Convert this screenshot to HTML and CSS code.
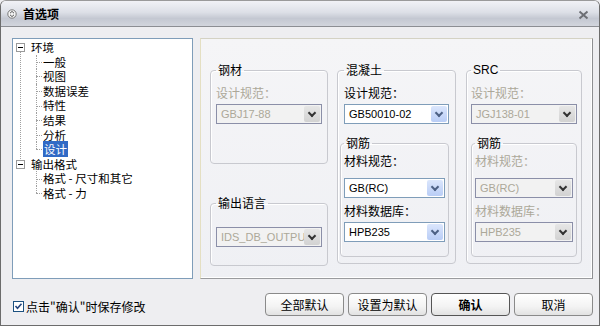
FILE: index.html
```html
<!DOCTYPE html>
<html lang="zh-CN">
  <head>
    <meta charset="UTF-8" />
    <title>首选项</title>
    <link rel="stylesheet" href="styles.css">
  </head>
  <body>
    <div class="window">
      <div class="titlebar">
        <svg class="app-icon" width="10" height="10" viewBox="0 0 10 10">
          <circle cx="5" cy="5" r="4.2" fill="#f4f4f4" stroke="#7a7a7a" stroke-width="1"/>
          <path d="M3 4.2 L5 2.4 L7 4.2 M3 5.8 L5 7.6 L7 5.8" fill="none" stroke="#555" stroke-width="1"/>
        </svg>
        <span class="title">首选项</span>
        <svg class="close" width="11" height="10" viewBox="0 0 11 10">
          <path d="M1.5 1.5 L9.5 8.5 M9.5 1.5 L1.5 8.5" stroke="#6d6f75" stroke-width="2"/>
        </svg>
      </div>

      <div class="content">
        <div class="main">
          <div class="tree">
            <div class="branch">
              <div class="node root"><span class="toggle"></span>环境</div>
              <div class="kids">
                <div class="node leaf">一般</div>
                <div class="node leaf">视图</div>
                <div class="node leaf">数据误差</div>
                <div class="node leaf">特性</div>
                <div class="node leaf">结果</div>
                <div class="node leaf">分析</div>
                <div class="node leaf"><span class="selected">设计</span></div>
              </div>
            </div>
            <div class="branch last">
              <div class="node root"><span class="toggle"></span>输出格式</div>
              <div class="kids">
                <div class="node leaf">格式 - 尺寸和其它</div>
                <div class="node leaf">格式 - 力</div>
              </div>
            </div>
          </div>

          <div class="panel">
            <div class="col col-steel">
              <fieldset class="group steel">
                <legend>钢材</legend>
                <div class="label disabled">设计规范：</div>
                <div class="combo disabled"><span class="value">GBJ17-88</span><span class="drop"></span></div>
              </fieldset>
              <fieldset class="group lang">
                <legend>输出语言</legend>
                <div class="combo disabled"><span class="value">IDS_DB_OUTPUT</span><span class="drop"></span></div>
              </fieldset>
            </div>

            <div class="col col-concrete">
              <fieldset class="group tall">
                <legend>混凝土</legend>
                <div class="label">设计规范：</div>
                <div class="combo"><span class="value">GB50010-02</span><span class="drop"></span></div>
                <fieldset class="group inner">
                  <legend>钢筋</legend>
                  <div class="label">材料规范：</div>
                  <div class="combo"><span class="value">GB(RC)</span><span class="drop"></span></div>
                  <div class="label second">材料数据库：</div>
                  <div class="combo"><span class="value">HPB235</span><span class="drop"></span></div>
                </fieldset>
              </fieldset>
            </div>

            <div class="col col-src">
              <fieldset class="group tall">
                <legend class="latin">SRC</legend>
                <div class="label disabled">设计规范：</div>
                <div class="combo disabled"><span class="value">JGJ138-01</span><span class="drop"></span></div>
                <fieldset class="group inner">
                  <legend>钢筋</legend>
                  <div class="label disabled">材料规范：</div>
                  <div class="combo disabled"><span class="value">GB(RC)</span><span class="drop"></span></div>
                  <div class="label disabled second">材料数据库：</div>
                  <div class="combo disabled"><span class="value">HPB235</span><span class="drop"></span></div>
                </fieldset>
              </fieldset>
            </div>
          </div>
        </div>

        <div class="footer">
          <label class="check">
            <span class="box">
              <svg width="9" height="9" viewBox="0 0 9 9"><path d="M1.5 4 L3.5 6.2 L7.5 1.8" fill="none" stroke="#24447c" stroke-width="1.6"/></svg>
            </span>
            点击"确认"时保存修改
          </label>
          <div class="buttons">
            <button>全部默认</button>
            <button>设置为默认</button>
            <button class="default">确认</button>
            <button>取消</button>
          </div>
        </div>
      </div>
    </div>
  </body>
</html>
```

FILE: styles.css
```css
body {
  margin: 0;
  font-family: "Liberation Sans", "Noto Sans CJK SC", sans-serif;
  font-size: 12px;
  color: #000;
  background: #eeeef1;
}
.window {
  width: 600px;
  height: 326px;
  box-sizing: border-box;
  border: 1px solid #6c6c6c;
  border-top-color: #9a9a9a;
  border-radius: 6px 6px 0 0;
  background: #eeeef1;
  overflow: hidden;
}
.titlebar {
  height: 25px;
  display: flex;
  align-items: center;
  padding: 0 8px 0 6px;
  background: linear-gradient(#f1f2f6, #dde0e7 45%, #c4c8d2 70%, #d2d5dd);
  border-bottom: 1px solid #8c8e93;
}
.app-icon {
  margin-right: 6px;
  margin-top: 1px;
}
.title {
  font-family: "Noto Sans CJK SC", sans-serif;
  font-weight: bold;
  font-size: 12px;
  flex: 1;
}
.close {
  margin-top: 2px;
  margin-right: 2px;
}
.content {
  padding: 11px 6px 0 11px;
}
.main {
  display: flex;
  gap: 7px;
  height: 241px;
}

/* tree */
.tree {
  width: 181px;
  box-sizing: border-box;
  border: 1px solid #7f9db9;
  background: #fff;
  padding-top: 1px;
  font-family: "Noto Sans CJK SC", sans-serif;
  font-size: 11.5px;
}
.branch {
  position: relative;
}
.branch:not(.last)::before {
  content: "";
  position: absolute;
  left: 7px;
  top: 11px;
  bottom: -4px;
  border-left: 1px dotted #a0a0a0;
}
.node {
  height: 14.6px;
  line-height: 14.6px;
  white-space: nowrap;
}
.root {
  display: flex;
  align-items: center;
  padding-left: 3px;
}
.toggle {
  position: relative;
  width: 7px;
  height: 7px;
  border: 1px solid #9a9a9a;
  background: #fff;
  margin-right: 6px;
  z-index: 1;
}
.toggle::after {
  content: "";
  position: absolute;
  left: 1px;
  right: 1px;
  top: 3px;
  border-top: 1px solid #000;
}
.leaf {
  position: relative;
  padding-left: 30px;
}
.leaf::before {
  content: "";
  position: absolute;
  left: 23px;
  width: 6px;
  top: 50%;
  border-top: 1px dotted #a0a0a0;
}
.leaf::after {
  content: "";
  position: absolute;
  left: 23px;
  top: 0;
  bottom: 0;
  border-left: 1px dotted #a0a0a0;
}
.leaf:last-child::after {
  bottom: 50%;
}
.selected {
  background: #316ac5;
  color: #fff;
  padding: 0 1px;
}

/* right panel */
.panel {
  flex: 1;
  box-sizing: border-box;
  display: flex;
  gap: 9px;
  padding: 24px 0 0 9px;
  border: 1px solid #d4d2c4;
  border-left-color: #e4dfc2;
  border-right-color: #8e8f92;
  border-bottom-color: #9a9b9e;
  box-shadow: inset -1px -1px 0 #fff;
  background: linear-gradient(#f5f5f7, #eff0f4);
}
.col {
  display: flex;
  flex-direction: column;
}
.col-steel { width: 118px; }
.col-concrete { width: 119px; }
.col-src { width: 116px; margin-left: 1px; }
.group {
  margin: 0;
  padding: 0 5px 6px;
  border: 1px solid #c8c9cf;
  border-radius: 4px;
  box-shadow: inset 1px 1px 0 #fff;
  min-width: 0;
  font-family: "Noto Sans CJK SC", sans-serif;
}
.group legend {
  padding: 0 2px;
  line-height: 14px;
  font-size: 12px;
}
.group legend.latin {
  font-family: "Liberation Sans", sans-serif;
}
.steel {
  height: 101px;
  box-sizing: border-box;
}
.lang {
  margin-top: 32px;
  height: 70px;
  box-sizing: border-box;
}
.lang .combo {
  margin-top: 17px;
}
.tall {
  height: 201px;
  box-sizing: border-box;
}
.col-concrete .tall {
  padding: 0 6px 6px;
}
.col-src .tall {
  padding: 0 4px 6px;
}
.label {
  margin-top: 8px;
  line-height: 16px;
}
.label.disabled {
  color: #aca899;
}
.combo {
  display: flex;
  align-items: center;
  height: 20px;
  margin-top: 3px;
  box-sizing: border-box;
  border: 1px solid #7f9db9;
  background: #fff;
  padding: 1px;
  font-family: "Liberation Sans", sans-serif;
  font-size: 11px;
}
.combo .value {
  flex: 1;
  min-width: 0;
  padding-left: 3px;
  white-space: nowrap;
}
.drop {
  flex: none;
  width: 16px;
  height: 16px;
  border-radius: 2px;
  background: linear-gradient(#dbe6fc, #b9cdf6);
  position: relative;
}
.drop::after {
  content: "";
  position: absolute;
  left: 5px;
  top: 4px;
  width: 4px;
  height: 4px;
  border-right: 2px solid #4d6185;
  border-bottom: 2px solid #4d6185;
  transform: rotate(45deg);
}
.combo.disabled {
  border-color: #8b8fa8;
  background: #f2f2f2;
  color: #aca899;
}
.combo.disabled .drop {
  background: linear-gradient(#e6e6e6, #d2d2d2);
}
.combo.disabled .drop::after {
  border-color: #333;
}
.inner {
  margin-top: 12px;
  height: 121px;
  box-sizing: border-box;
  padding: 0 3px 6px;
}
.col-concrete .inner {
  margin-left: -4px;
  margin-right: 0;
}
.inner .label {
  margin-top: 3px;
}
.inner .label.second {
  margin-top: 5px;
}
.inner .combo {
  margin-top: 9px;
}
.inner .label.second + .combo {
  margin-top: 3px;
}

/* footer */
.footer {
  display: flex;
  align-items: center;
  justify-content: space-between;
  margin-top: 14px;
}
.check {
  display: flex;
  align-items: center;
  font-family: "Noto Sans CJK SC", sans-serif;
  margin-left: 1px;
  margin-top: 4px;
}
.box {
  width: 11px;
  height: 11px;
  box-sizing: border-box;
  border: 1px solid #1c5180;
  background: #fff;
  display: flex;
  align-items: center;
  justify-content: center;
  margin-right: 2px;
}
.buttons {
  display: flex;
  gap: 4px;
}
button {
  width: 79px;
  height: 23px;
  border: 1px solid #8a8a8a;
  border-radius: 4px;
  background: linear-gradient(#ffffff, #f3f3f3 60%, #e2e2e2);
  font-family: "Noto Sans CJK SC", sans-serif;
  font-size: 12px;
  color: #000;
  padding: 0;
}
button.default {
  font-weight: bold;
  border-color: #555;
}
```
